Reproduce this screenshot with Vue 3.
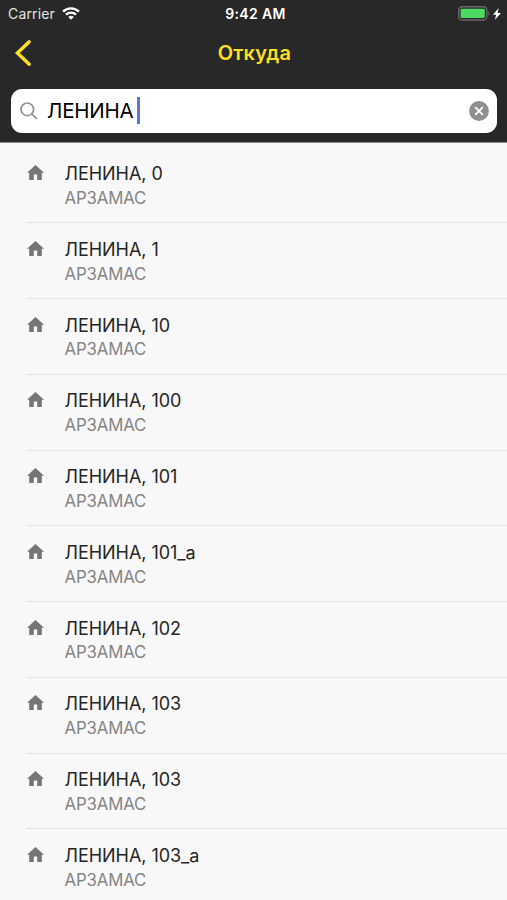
<template>
  <div class="screen">
    <header class="header">
      <div class="status-bar">
        <div class="status-left">
          <span class="carrier">Carrier</span>
          <svg class="wifi" width="18" height="13" viewBox="0 0 18 13">
            <path d="M1.1 4.6a11.3 11.3 0 0 1 15.8 0" />
            <path d="M4 7.6a7.2 7.2 0 0 1 10 0" />
            <path class="wifi-dot" d="M9 12.8 6.2 10a4 4 0 0 1 5.6 0z" />
          </svg>
        </div>
        <span class="time">9:42 AM</span>
        <div class="status-right">
          <svg width="32" height="15" viewBox="0 0 32 15">
            <rect x="0.8" y="0.8" width="28" height="13.2" rx="3.6" fill="none" stroke="#68686a" stroke-width="1.5" />
            <rect x="2.6" y="2.7" width="24.2" height="9.4" rx="1.4" fill="#4cd964" />
            <path d="M30.3 5.2c1.4.5 1.4 4 0 4.5z" fill="#68686a" />
          </svg>
          <svg class="bolt" width="8" height="12" viewBox="0 0 8 12">
            <path d="M5.6 0 0 6.7h3.2L1.8 12 8 4.9H4.6z" fill="#fff" />
          </svg>
        </div>
      </div>

      <div class="nav-bar">
        <svg class="back" width="18" height="28" viewBox="0 0 18 28">
          <path d="M15.2 2.8 3.4 14l11.8 11.2" />
        </svg>
        <h1 class="title">Откуда</h1>
      </div>

      <div class="search">
        <svg class="search-icon" width="18" height="19" viewBox="0 0 18 19">
          <circle cx="7.3" cy="7.3" r="6.3" />
          <path d="m11.8 11.8 5.2 5.2" />
        </svg>
        <span class="query">{{ query }}</span>
        <span class="caret"></span>
        <svg class="clear" width="20" height="20" viewBox="0 0 20 20">
          <circle cx="10" cy="10" r="9.9" fill="#8e8e93" />
          <path d="m6.2 6.2 7.6 7.6M13.8 6.2l-7.6 7.6" stroke="#fff" stroke-width="1.9" />
        </svg>
      </div>
    </header>

    <ul class="list">
      <li v-for="(item, index) in addresses" :key="index" class="row">
        <svg class="home" width="17" height="15" viewBox="0 0 17 15">
          <path d="M8.5 0 0 7.8h2.2V15h4.6V9.6h3.4V15h4.6V7.8H17z" />
        </svg>
        <div class="info">
          <div class="street">{{ item.street }}</div>
          <div class="city">{{ item.city }}</div>
        </div>
      </li>
    </ul>
  </div>
</template>

<script setup>
import { ref } from 'vue'

const query = ref('ЛЕНИНА')

const houses = ['0', '1', '10', '100', '101', '101_а', '102', '103', '103', '103_а']

const addresses = houses.map((house) => ({
  street: `ЛЕНИНА, ${house}`,
  city: 'АРЗАМАС'
}))
</script>

<style>
body {
  margin: 0;
  background: #f8f8f8;
}
</style>

<style scoped>
.screen {
  width: 100%;
  height: 900px;
  overflow: hidden;
  box-sizing: border-box;
  background: #f8f8f8;
  font-family: Inter, "Liberation Sans", sans-serif;
}

.header {
  height: 143px;
  background: #282828;
  border-bottom: 1px solid #8b8b8b;
  box-sizing: border-box;
}

/* status bar */
.status-bar {
  display: grid;
  grid-template-columns: 1fr auto 1fr;
  align-items: center;
  height: 27px;
  padding: 0 6px 0 8px;
  color: #fff;
}

.status-left,
.status-right {
  display: flex;
  align-items: center;
}

.status-right {
  justify-content: flex-end;
}

.carrier {
  font-size: 14px;
  letter-spacing: 0.15px;
  color: #e4e4e4;
}

.wifi {
  margin-left: 7px;
  fill: none;
  stroke: #fff;
  stroke-width: 2.4;
}

.wifi .wifi-dot {
  fill: #fff;
  stroke: none;
}

.time {
  padding-left: 2px;
  font-size: 14px;
  font-weight: 600;
  letter-spacing: 0.35px;
}

.bolt {
  margin-left: 3px;
}

/* navigation */
.nav-bar {
  display: grid;
  grid-template-columns: 1fr auto 1fr;
  align-items: center;
  height: 51px;
  padding: 0 14px;
}

.back {
  fill: none;
  stroke: #fde021;
  stroke-width: 3.4;
  stroke-linecap: round;
}

.title {
  margin: 0;
  padding-left: 2px;
  font-size: 20px;
  font-weight: 600;
  letter-spacing: 0.2px;
  color: #fde021;
}

/* search field */
.search {
  display: flex;
  align-items: center;
  height: 44px;
  margin: 11px 10px 0 11px;
  padding: 0 8px 0 9px;
  border-radius: 11px;
  background: #fff;
  box-sizing: border-box;
}

.search-icon {
  fill: none;
  stroke: #929296;
  stroke-width: 1.7;
}

.query {
  margin-left: 9px;
  padding-bottom: 2px;
  font-size: 20.5px;
  letter-spacing: -0.2px;
  color: #000;
}

.caret {
  width: 3px;
  height: 27px;
  margin: 0 0 2px 3px;
  background: #5578dc;
}

.clear {
  margin-left: auto;
  fill: none;
}

/* results */
.list {
  margin: 0;
  padding: 4.6px 0 0 26px;
  list-style: none;
}

.row {
  display: flex;
  height: 75.75px;
  padding-top: 14.6px;
  border-bottom: 1px solid #e4e4e5;
  box-sizing: border-box;
}

.home {
  margin: 3px 20.5px 0 1px;
  fill: #757575;
}

.street {
  font-size: 18px;
  line-height: 23px;
  letter-spacing: -0.04px;
  color: #262626;
}

.city {
  margin-top: 1.6px;
  font-size: 16.8px;
  line-height: 22px;
  letter-spacing: -0.15px;
  color: #858585;
}
</style>
